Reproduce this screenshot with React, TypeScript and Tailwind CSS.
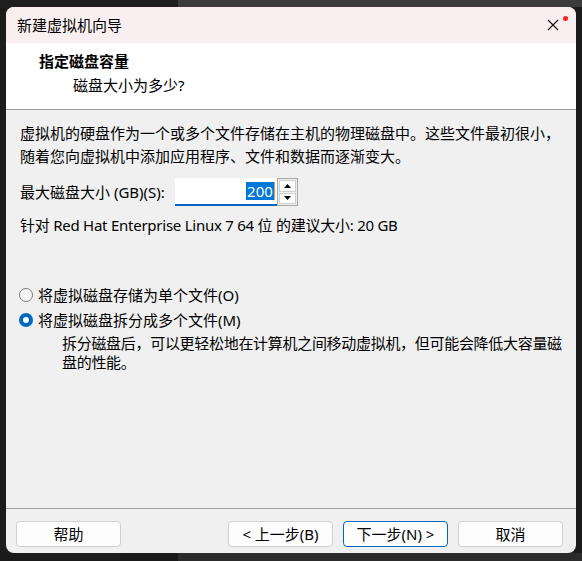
import React from "react";

const font = { fontFamily: '"Noto Sans", "Noto Sans CJK SC", sans-serif' };

function Radio({ checked, label }: { checked?: boolean; label: string }) {
  return (
    <div className="flex items-center h-[20px]">
      {checked ? (
        <span className="w-[14px] h-[14px] rounded-full bg-[#0067c0] flex items-center justify-center ml-[13px]">
          <span className="w-[6px] h-[6px] rounded-full bg-white" />
        </span>
      ) : (
        <span className="w-[14px] h-[14px] rounded-full border border-[#7a7a7a] bg-[#f6f6f6] ml-[13px]" />
      )}
      <span className="ml-[5px]">{label}</span>
    </div>
  );
}

function Btn({ children, primary }: { children: React.ReactNode; primary?: boolean }) {
  return (
    <button
      className={
        "w-[105px] h-[26px] rounded-[4px] bg-[#fdfdfd] text-[15px] text-black flex items-center justify-center " +
        (primary ? "border border-[#0067c0]" : "border border-[#d0d0d0]")
      }
    >
      {children}
    </button>
  );
}

export default function App() {
  return (
    <div className="w-[582px] h-[561px] bg-[#1c1c1c] flex flex-col text-black" style={font}>
      <div className="h-[7px] flex">
        <div className="w-[178px] bg-[#1e1e1e]" />
        <div className="flex-1 bg-[#3b3b3b]" />
      </div>
      <div className="flex-1 flex pl-[6px] pr-[6px]">
        <div className="flex-1 flex flex-col rounded-[8px] overflow-hidden bg-[#f0f0f0]">
          {/* title bar */}
          <div className="h-[36px] bg-[#f9eff0] flex items-center pl-[11px] pr-[8px] text-[15px]">
            <span>新建虚拟机向导</span>
            <div className="ml-auto flex items-start h-[20px]">
              <svg width="12" height="12" viewBox="0 0 12 12" className="mt-[4px] mr-[4px]">
                <path d="M1 1 L11 11 M11 1 L1 11" stroke="#111" strokeWidth="1.2" />
              </svg>
              <span className="w-[5px] h-[5px] rounded-full bg-[#ff2020] mt-[1px]" />
            </div>
          </div>
          {/* header */}
          <div className="h-[67px] bg-white border-b border-[#a0a0a0] pl-[33px] pt-[6px] text-[15px] leading-[24px]">
            <div className="font-bold">指定磁盘容量</div>
            <div className="pl-[34px]">磁盘大小为多少?</div>
          </div>
          {/* content */}
          <div className="flex-1 flex flex-col pl-[14px] pt-[12px] text-[15px] leading-[23px] whitespace-nowrap">
            <p>
              虚拟机的硬盘作为一个或多个文件存储在主机的物理磁盘中。这些文件最初很小，
              <br />
              随着您向虚拟机中添加应用程序、文件和数据而逐渐变大。
            </p>
            <div className="flex items-center mt-[10px] h-[28px]">
              <span>最大磁盘大小 (GB)(S):</span>
              <div className="ml-[10px] flex h-[28px]">
                <div className="w-[102px] h-[28px] bg-white border-b-2 border-[#0067c0] flex items-center justify-end pr-[2px]">
                  <span className="bg-[#0078d7] text-white leading-[18px] px-[1px]">200</span>
                  <span className="w-px h-[18px] bg-[#e0a040]" />
                </div>
                <div className="w-[21px] h-[28px] border border-[#a8a8a8] bg-[#f0f0f0] flex flex-col p-px gap-px">
                  <div className="flex-1 bg-white border border-[#cfcfcf] flex items-center justify-center">
                    <svg width="7" height="4" viewBox="0 0 7 4"><path d="M0 4 L3.5 0 L7 4Z" fill="#000" /></svg>
                  </div>
                  <div className="flex-1 bg-white border border-[#cfcfcf] flex items-center justify-center">
                    <svg width="7" height="4" viewBox="0 0 7 4"><path d="M0 0 L3.5 4 L7 0Z" fill="#000" /></svg>
                  </div>
                </div>
              </div>
            </div>
            <p className="mt-[8px] tracking-[-0.25px]">针对 Red Hat Enterprise Linux 7 64 位 的建议大小: 20 GB</p>
            <div className="mt-[48px] -ml-[14px] flex flex-col gap-[5px]">
              <Radio label="将虚拟磁盘存储为单个文件(O)" />
              <Radio checked label="将虚拟磁盘拆分成多个文件(M)" />
            </div>
            <p className="pl-[42px] mt-[4px] leading-[19px] tracking-[-0.3px]">
              拆分磁盘后，可以更轻松地在计算机之间移动虚拟机，但可能会降低大容量磁
              <br />
              盘的性能。
            </p>
          </div>
          {/* footer */}
          <div className="h-[45px] border-t border-[#a0a0a0] flex items-start pt-[12px] pl-[10px] pr-[13px]">
            <Btn>帮助</Btn>
            <div className="ml-auto flex gap-[10px]">
              <Btn>&lt; 上一步(B)</Btn>
              <Btn primary>下一步(N) &gt;</Btn>
              <Btn>取消</Btn>
            </div>
          </div>
        </div>
      </div>
      <div className="h-[8px] flex">
        <div className="w-[178px] bg-[#1a1a1a]" />
        <div className="flex-1 bg-[#2b2b2b]" />
      </div>
    </div>
  );
}
